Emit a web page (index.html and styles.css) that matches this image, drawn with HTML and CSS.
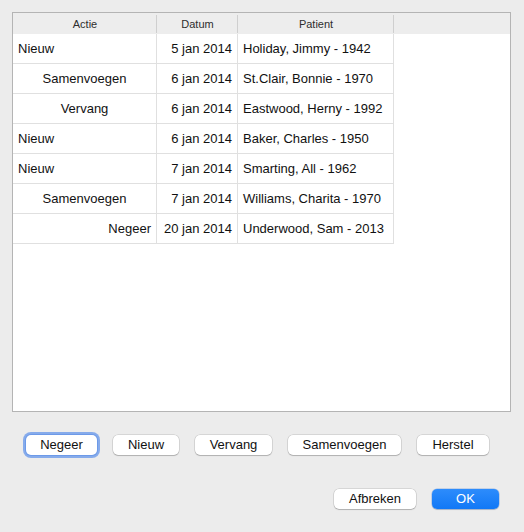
FILE: index.html
```html
<!DOCTYPE html>
<html lang="nl">
<head>
<meta charset="utf-8">
<title>Acties</title>
<link rel="stylesheet" href="styles.css">
</head>
<body>
<div class="dialog">
  <div class="table-box">
    <div class="header">
      <div class="hcell">Actie</div>
      <div class="hcell">Datum</div>
      <div class="hcell">Patient</div>
      <div class="hcell hfill"></div>
    </div>
    <div class="rows">
      <div class="row"><div class="cell actie left">Nieuw</div><div class="cell datum">5 jan 2014</div><div class="cell patient">Holiday, Jimmy - 1942</div></div>
      <div class="row"><div class="cell actie center">Samenvoegen</div><div class="cell datum">6 jan 2014</div><div class="cell patient">St.Clair, Bonnie - 1970</div></div>
      <div class="row"><div class="cell actie center">Vervang</div><div class="cell datum">6 jan 2014</div><div class="cell patient">Eastwood, Herny - 1992</div></div>
      <div class="row"><div class="cell actie left">Nieuw</div><div class="cell datum">6 jan 2014</div><div class="cell patient">Baker, Charles - 1950</div></div>
      <div class="row"><div class="cell actie left">Nieuw</div><div class="cell datum">7 jan 2014</div><div class="cell patient">Smarting, All - 1962</div></div>
      <div class="row"><div class="cell actie center">Samenvoegen</div><div class="cell datum">7 jan 2014</div><div class="cell patient">Williams, Charita - 1970</div></div>
      <div class="row"><div class="cell actie right">Negeer</div><div class="cell datum">20 jan 2014</div><div class="cell patient">Underwood, Sam - 2013</div></div>
    </div>
  </div>
  <div class="actions">
    <button class="btn focused w-negeer">Negeer</button>
    <button class="btn w-nieuw">Nieuw</button>
    <button class="btn w-vervang">Vervang</button>
    <button class="btn w-samen">Samenvoegen</button>
    <button class="btn w-herstel">Herstel</button>
  </div>
  <div class="footer">
    <button class="btn w-afbreken">Afbreken</button>
    <button class="btn primary w-ok">OK</button>
  </div>
</div>
</body>
</html>
```
FILE: styles.css
```css
html, body {
  margin: 0;
  padding: 0;
  background: #ececec;
  font-family: "Liberation Sans", Arial, sans-serif;
  font-size: 13px;
  color: #1a1a1a;
}

.dialog {
  width: 524px;
  height: 532px;
  padding: 12px 0 0 0;
  box-sizing: border-box;
}

.table-box {
  margin: 0 13px 0 12px;
  height: 400px;
  box-sizing: border-box;
  border: 1px solid #b4b4b4;
  background: #ffffff;
  display: flex;
  flex-direction: column;
}

.header {
  display: grid;
  grid-template-columns: 144px 81px 156px 1fr;
  height: 21px;
  background: #ededed;
  flex: none;
}

.hcell {
  position: relative;
  display: flex;
  align-items: center;
  justify-content: center;
  font-size: 11px;
  color: #2e2e2e;
  padding-top: 0;
}

.hcell::after {
  content: "";
  position: absolute;
  right: 0;
  top: 2px;
  bottom: 1px;
  width: 1px;
  background: #cfcfcf;
}

.hfill::after {
  display: none;
}

.rows {
  display: flex;
  flex-direction: column;
}

.row {
  display: grid;
  grid-template-columns: 144px 81px 156px;
  height: 30px;
}

.cell {
  display: flex;
  align-items: center;
  box-sizing: border-box;
  border-right: 1px solid #e0e0e0;
  border-bottom: 1px solid #e0e0e0;
  white-space: nowrap;
  color: #111;
}

.actie.left {
  justify-content: flex-start;
  padding-left: 5px;
}

.actie.center {
  justify-content: center;
}

.actie.right {
  justify-content: flex-end;
  padding-right: 5px;
}

.datum {
  justify-content: flex-end;
  padding-right: 5px;
}

.patient {
  justify-content: flex-start;
  padding-left: 5px;
}

.actions {
  display: flex;
  gap: 16px;
  padding-left: 26px;
  margin-top: 23px;
}

.footer {
  display: flex;
  justify-content: flex-end;
  gap: 16px;
  padding-right: 25px;
  margin-top: 34px;
}

.btn {
  height: 20px;
  padding: 0;
  border: none;
  border-radius: 5px;
  background: #ffffff;
  font-family: "Liberation Sans", Arial, sans-serif;
  font-size: 13px;
  color: #111;
  box-shadow: 0 0 0 0.5px rgba(0, 0, 0, 0.18), 0 1px 1px rgba(0, 0, 0, 0.18);
  line-height: 20px;
  text-align: center;
}

.btn.focused {
  box-shadow: 0 0 0 1px rgba(90, 140, 230, 0.55), 0 0 0 3px rgba(100, 150, 235, 0.75);
}

.btn.primary {
  background: linear-gradient(#2d8cfc, #1178f6);
  color: #ffffff;
  box-shadow: 0 0 0 0.5px rgba(0, 80, 200, 0.35), 0 1px 1px rgba(0, 0, 0, 0.15);
}

.w-negeer { width: 71px; }
.w-nieuw { width: 66px; }
.w-vervang { width: 77px; }
.w-samen { width: 113px; }
.w-herstel { width: 72px; }
.w-afbreken { width: 82px; }
.w-ok { width: 67px; }
```
